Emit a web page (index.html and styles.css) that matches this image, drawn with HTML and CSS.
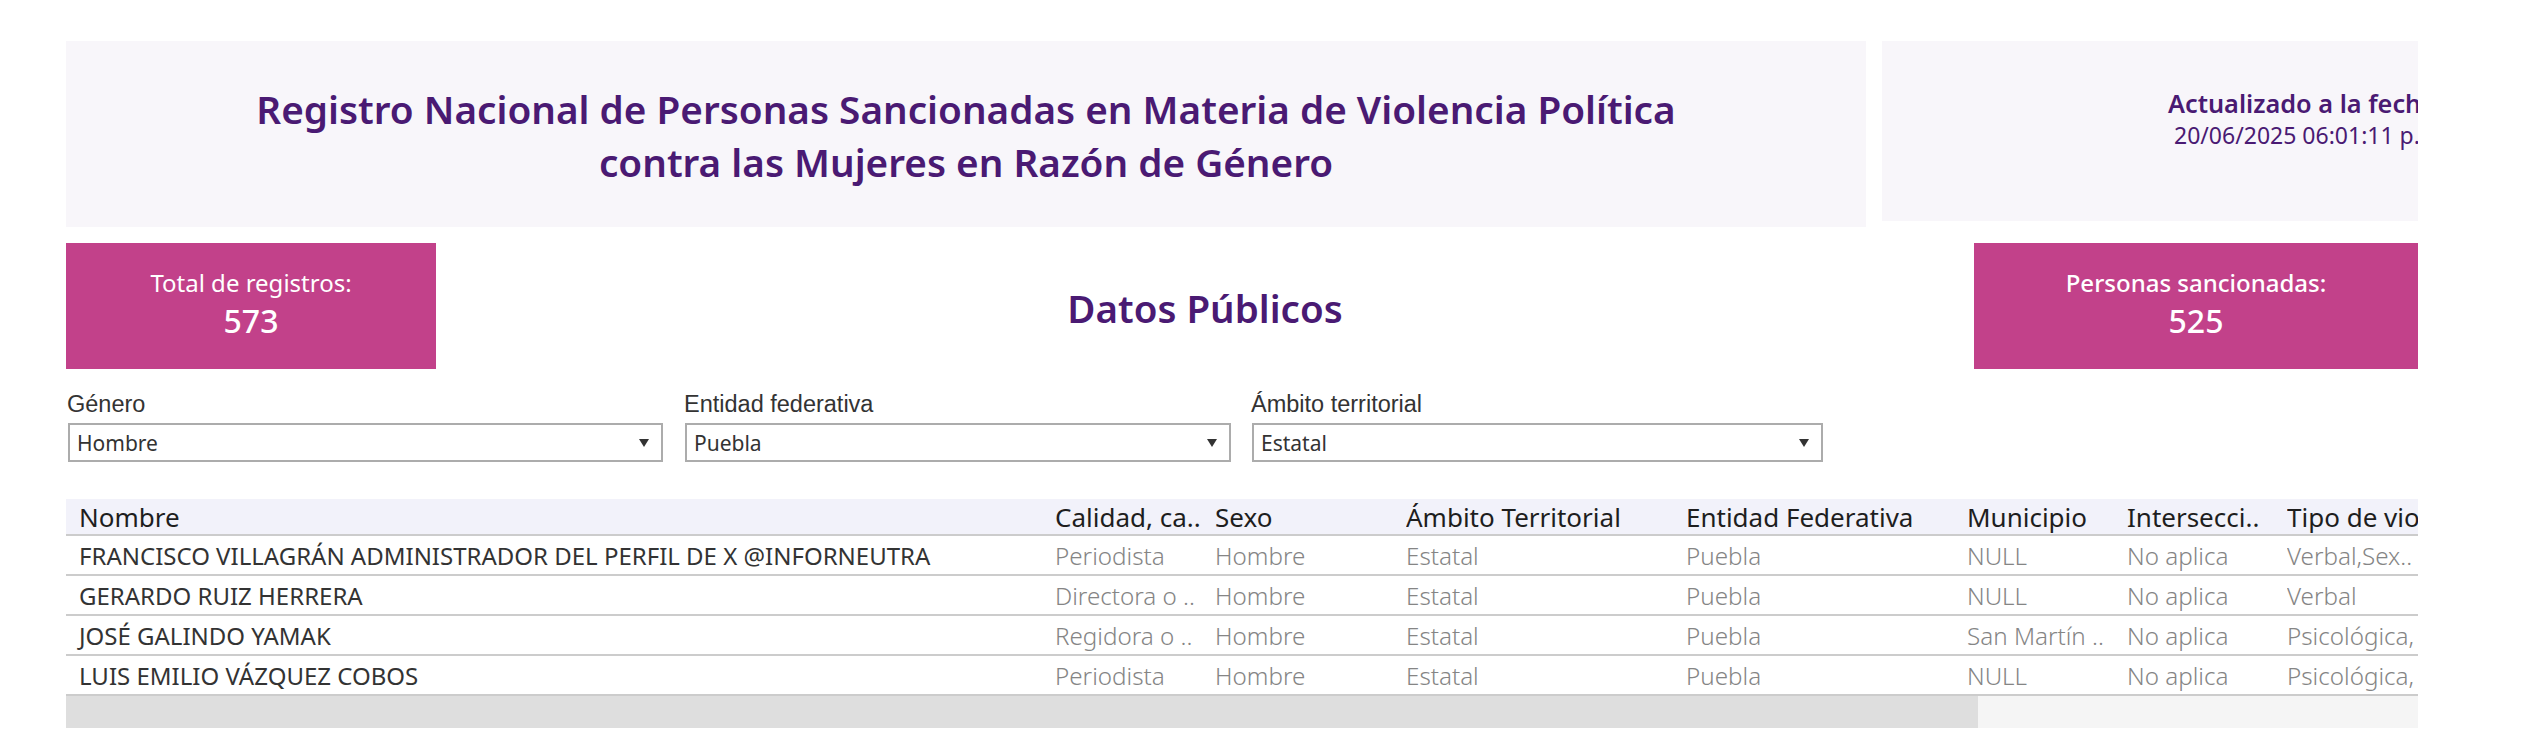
FILE: index.html
```html
<!DOCTYPE html>
<html lang="es">
<head>
<meta charset="utf-8">
<title>Registro Nacional de Personas Sancionadas</title>
<link rel="stylesheet" href="styles.css">
</head>
<body>
<div class="page">
  <div class="top">
    <div class="title-panel">
      <h1 class="title">Registro Nacional de Personas Sancionadas en Materia de Violencia Política<br>contra las Mujeres en Razón de Género</h1>
    </div>
    <div class="update-panel">
      <div class="update-inner">
        <div class="update-label">Actualizado a la fecha:</div>
        <div class="update-date">20/06/2025 06:01:11 p. m.</div>
      </div>
    </div>
  </div>

  <div class="kpis">
    <div class="kpi kpi-left">
      <div class="kpi-label">Total de registros:</div>
      <div class="kpi-value">573</div>
    </div>
    <div class="center-title">Datos Públicos</div>
    <div class="kpi kpi-right">
      <div class="kpi-label kpi-label-strong">Personas sancionadas:</div>
      <div class="kpi-value">525</div>
    </div>
  </div>

  <div class="filters">
    <div class="filter f-genero">
      <div class="filter-label">Género</div>
      <div class="select"><span>Hombre</span><svg class="arrow" width="10" height="8" viewBox="0 0 10 8"><polygon points="0,0 10,0 5,8" fill="#333"/></svg></div>
    </div>
    <div class="filter f-entidad">
      <div class="filter-label">Entidad federativa</div>
      <div class="select"><span>Puebla</span><svg class="arrow" width="10" height="8" viewBox="0 0 10 8"><polygon points="0,0 10,0 5,8" fill="#333"/></svg></div>
    </div>
    <div class="filter f-ambito">
      <div class="filter-label">Ámbito territorial</div>
      <div class="select"><span>Estatal</span><svg class="arrow" width="10" height="8" viewBox="0 0 10 8"><polygon points="0,0 10,0 5,8" fill="#333"/></svg></div>
    </div>
  </div>

  <div class="table">
    <div class="row head">
      <div class="c c1">Nombre</div>
      <div class="c">Calidad, ca..</div>
      <div class="c">Sexo</div>
      <div class="c">Ámbito Territorial</div>
      <div class="c">Entidad Federativa</div>
      <div class="c">Municipio</div>
      <div class="c">Intersecci..</div>
      <div class="c">Tipo de violencia</div>
    </div>
    <div class="row">
      <div class="c c1 name">FRANCISCO VILLAGRÁN ADMINISTRADOR DEL PERFIL DE X @INFORNEUTRA</div>
      <div class="c">Periodista</div>
      <div class="c">Hombre</div>
      <div class="c">Estatal</div>
      <div class="c">Puebla</div>
      <div class="c">NULL</div>
      <div class="c">No aplica</div>
      <div class="c">Verbal,Sex..</div>
    </div>
    <div class="row">
      <div class="c c1 name">GERARDO RUIZ HERRERA</div>
      <div class="c">Directora o ..</div>
      <div class="c">Hombre</div>
      <div class="c">Estatal</div>
      <div class="c">Puebla</div>
      <div class="c">NULL</div>
      <div class="c">No aplica</div>
      <div class="c">Verbal</div>
    </div>
    <div class="row">
      <div class="c c1 name">JOSÉ GALINDO YAMAK</div>
      <div class="c">Regidora o ..</div>
      <div class="c">Hombre</div>
      <div class="c">Estatal</div>
      <div class="c">Puebla</div>
      <div class="c">San Martín ..</div>
      <div class="c">No aplica</div>
      <div class="c">Psicológica, Verbal</div>
    </div>
    <div class="row">
      <div class="c c1 name">LUIS EMILIO VÁZQUEZ COBOS</div>
      <div class="c">Periodista</div>
      <div class="c">Hombre</div>
      <div class="c">Estatal</div>
      <div class="c">Puebla</div>
      <div class="c">NULL</div>
      <div class="c">No aplica</div>
      <div class="c">Psicológica, Verbal</div>
    </div>
    <div class="scrollbar"><div class="thumb"></div></div>
  </div>
</div>
</body>
</html>
```

FILE: styles.css
```css
html, body {
  margin: 0;
  padding: 0;
  background: #ffffff;
}
body {
  font-family: "Noto Sans", "Open Sans", sans-serif;
  width: 2522px;
  height: 733px;
  overflow: hidden;
}
.page {
  padding: 41px 0 0 66px;
  width: 2352px;
}

/* top panels */
.top {
  display: flex;
  gap: 16px;
  align-items: flex-start;
}
.title-panel {
  width: 1800px;
  height: 186px;
  background: #f8f6fa;
  box-sizing: border-box;
  padding-top: 42px;
  text-align: center;
}
.title {
  margin: 0;
  font-size: 38.7px;
  line-height: 53px;
  font-weight: 600;
  color: #4a1a73;
}
.update-panel {
  width: 536px;
  height: 180px;
  background: #f8f6fa;
  box-sizing: border-box;
  padding: 46px 0 0 286px;
  overflow: hidden;
}
.update-inner {
  white-space: nowrap;
  color: #4a1a73;
}
.update-label {
  font-size: 25.3px;
  line-height: 32px;
  font-weight: 600;
}
.update-date {
  margin-left: 6px;
  font-size: 23px;
  line-height: 32px;
  font-weight: 400;
}

/* KPI row */
.kpis {
  display: flex;
  margin-top: 16px;
  height: 126px;
}
.kpi {
  background: #c2418a;
  color: #ffffff;
  text-align: center;
  box-sizing: border-box;
  padding-top: 25px;
}
.kpi-left { width: 370px; }
.kpi-right { width: 444px; }
.kpi-label {
  font-size: 24px;
  line-height: 30px;
  font-weight: 400;
}
.kpi-label-strong { font-weight: 500; }
.kpi-value {
  margin-top: 3px;
  font-size: 32px;
  line-height: 40px;
  font-weight: 500;
}
.center-title {
  flex: 1;
  display: flex;
  align-items: center;
  justify-content: center;
  padding-top: 4px;
  font-size: 38.5px;
  font-weight: 600;
  color: #4a1a73;
}

/* filters */
.filters {
  display: flex;
  margin-top: 21px;
  padding-left: 2px;
}
.filter-label {
  font-family: "Liberation Sans", Arial, sans-serif;
  font-size: 23.5px;
  line-height: 28px;
  color: #333333;
  margin-left: -1px;
}
.f-genero { width: 595px; }
.f-entidad { width: 546px; margin-left: 22px; }
.f-ambito { width: 571px; margin-left: 21px; }
.select {
  margin-top: 5px;
  height: 39px;
  box-sizing: border-box;
  border: 2px solid #acacac;
  display: flex;
  align-items: center;
  justify-content: space-between;
  padding: 0 12px 0 7px;
  font-size: 21px;
  color: #333333;
}
.arrow { display: block; }

/* table */
.table {
  margin-top: 37px;
  width: 2352px;
  overflow: hidden;
}
.row {
  display: grid;
  grid-template-columns: 989px 160px 191px 280px 281px 160px 160px 131px;
  height: 40px;
  box-sizing: border-box;
  border-bottom: 2px solid #cccccc;
  align-items: center;
}
.row.head {
  height: 37px;
  background: #f2f2fa;
  font-size: 26px;
  color: #1e1e1e;
}
.c {
  white-space: nowrap;
  overflow: hidden;
}
.c1 { padding-left: 13px; }
.row:not(.head) .c {
  font-size: 24.2px;
  font-weight: 300;
  color: #858585;
}
.row:not(.head) .c.name {
  font-size: 24px;
  font-weight: 400;
  color: #333333;
}
.scrollbar {
  height: 32px;
  background: #f5f5f5;
}
.thumb {
  width: 1912px;
  height: 32px;
  background: #dedede;
}
```
